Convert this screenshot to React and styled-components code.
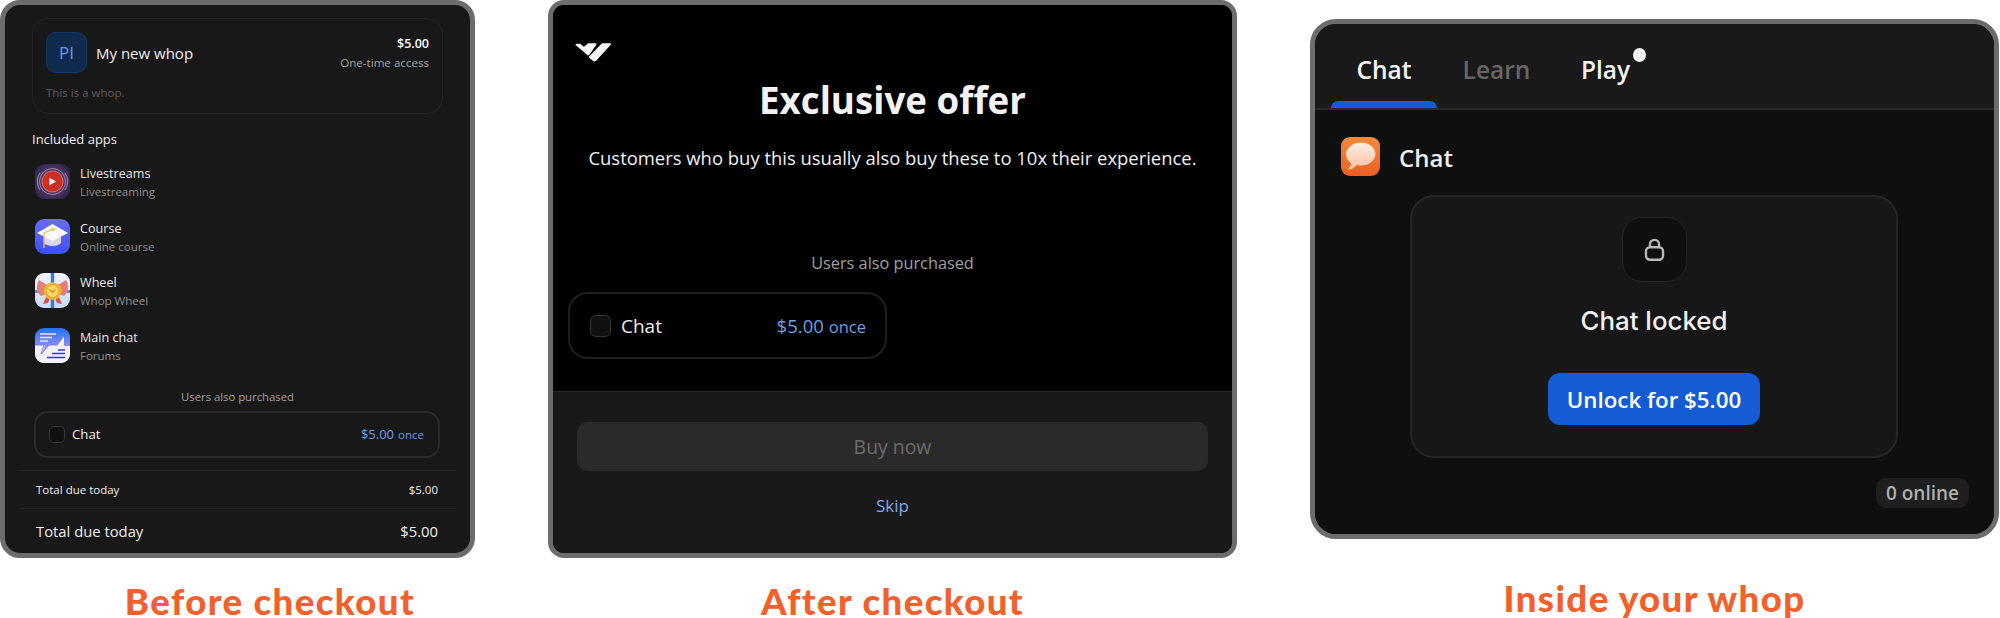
import React from "react";
import styled, { createGlobalStyle } from "styled-components";

const Global = createGlobalStyle`
  html, body { margin: 0; padding: 0; background: #fff; }
  body { font-family: "Open Sans", "Noto Sans", sans-serif; overflow: hidden; }
  * { box-sizing: border-box; }
`;

const Page = styled.div`
  display: flex;
  align-items: flex-start;
  width: 2000px;
  height: 618px;
  overflow: hidden;
`;

const Column = styled.section`
  flex: none;
  width: ${(p) => p.$width}px;
  margin-left: ${(p) => p.$left}px;
  padding-top: ${(p) => p.$top || 0}px;
`;

const Frame = styled.div`
  height: ${(p) => p.$height}px;
  border: 5px solid #6c6c6c;
  border-radius: ${(p) => p.$radius}px;
  background: ${(p) => p.$bg};
  overflow: hidden;
  display: flex;
  flex-direction: column;
`;

const Caption = styled.h2`
  margin: ${(p) => p.$top}px 0 0 ${(p) => p.$shift || 0}px;
  text-align: center;
  font-family: "Lato", sans-serif;
  font-weight: 900;
  font-size: 36.6px;
  line-height: 30px;
  letter-spacing: 1.4px;
  color: #f4602a;
  white-space: nowrap;
`;

/* Before checkout */
const BeforeBody = styled.div`
  padding: 13px 27px 0 27px;
  display: flex;
  flex-direction: column;
`;
const OfferCard = styled.div`
  height: 96px;
  padding: 13px;
  border: 1px solid #242424;
  border-radius: 16px;
`;
const OfferTop = styled.div`
  display: flex;
  align-items: center;
`;
const Avatar = styled.div`
  width: 41px;
  height: 41px;
  border-radius: 10px;
  background: #102a4e;
  border: 1px solid #16396a;
  color: #5e9fec;
  font-size: 17px;
  display: flex;
  align-items: center;
  justify-content: center;
  margin-right: 9px;
`;
const OfferName = styled.div`
  font-size: 15px;
  color: #eee;
  flex: 1;
`;
const OfferPrice = styled.div`
  text-align: right;
`;
const PriceTop = styled.div`
  font-size: 12.5px;
  line-height: 20px;
  font-weight: 600;
  color: #fff;
`;
const PriceSub = styled.div`
  font-size: 11.6px;
  line-height: 18px;
  color: #a3a3a3;
`;
const OfferDesc = styled.div`
  margin-top: 12px;
  font-size: 11.5px;
  line-height: 16px;
  color: #5c5c5c;
`;
const SectionTitle = styled.div`
  margin-top: 15px;
  font-size: 13px;
  line-height: 20px;
  color: #eee;
`;
const AppList = styled.div`
  margin: 15px 0 0 3px;
  display: flex;
  flex-direction: column;
  gap: 19.67px;
`;
const AppRow = styled.div`
  display: flex;
  gap: 10px;
  height: 35px;
`;
const AppIconBox = styled.svg`
  width: 35px;
  height: 35px;
  flex: none;
  border-radius: 9px;
`;
const AppText = styled.div`
  margin-top: 1px;
`;
const AppName = styled.div`
  font-size: 12.6px;
  line-height: 18px;
  color: #e8e8e8;
`;
const AppSub = styled.div`
  font-size: 11.5px;
  line-height: 18px;
  color: #8f8f8f;
`;
const Purchased = styled.div`
  margin-top: ${(p) => p.$top}px;
  text-align: center;
  font-size: ${(p) => p.$size}px;
  line-height: ${(p) => p.$line}px;
  color: #a0a0a0;
`;
const UpsellBox = styled.div`
  margin: ${(p) => p.$top}px 0 0 ${(p) => p.$left}px;
  width: ${(p) => p.$width}px;
  height: ${(p) => p.$height}px;
  padding: 0 ${(p) => p.$padRight}px 0 ${(p) => p.$padLeft}px;
  border: 2px solid ${(p) => p.$line};
  border-radius: ${(p) => p.$radius}px;
  display: flex;
  align-items: center;
`;
const Check = styled.span`
  flex: none;
  width: ${(p) => p.$size}px;
  height: ${(p) => p.$size + 1}px;
  margin-right: ${(p) => p.$gap}px;
  border: 1.5px solid #363636;
  border-radius: ${(p) => p.$radius}px;
  background: #101010;
`;
const UpsellName = styled.span`
  flex: 1;
  font-size: ${(p) => p.$size}px;
  color: #eee;
`;
const UpsellPrice = styled.span`
  color: #6f9fe4;
  font-size: ${(p) => p.$size}px;
  white-space: nowrap;
`;
const Once = styled.span`
  font-size: ${(p) => p.$size}px;
  margin-left: ${(p) => p.$gap}px;
`;
const Totals = styled.div`
  margin: 12px -13px 0;
`;
const TotalRow = styled.div`
  height: ${(p) => p.$height}px;
  padding: 0 18px 0 17px;
  border-top: 1px solid #232323;
  display: flex;
  align-items: center;
  justify-content: space-between;
  font-size: ${(p) => p.$size}px;
  color: #eee;
`;

/* After checkout */
const UpperPane = styled.div`
  height: 386px;
  padding: 36px 15px 0;
  background: #000;
  display: flex;
  flex-direction: column;
`;
const LogoMark = styled.svg`
  display: block;
  width: 40px;
  height: 22px;
  margin-left: 5px;
`;
const OfferTitle = styled.h1`
  margin: 14px 0 0;
  text-align: center;
  font-size: 36.7px;
  line-height: 46px;
  font-weight: 700;
  color: #f2f2f2;
`;
const OfferSub = styled.p`
  margin: 21px 0 0;
  text-align: center;
  font-size: 18.45px;
  line-height: 28px;
  color: #f0f0f0;
  white-space: nowrap;
`;
const LowerPane = styled.div`
  flex: 1;
  background: #191919;
  border-top: 1px solid #2b2b2b;
  padding: 30px 24px 0;
`;
const BuyButton = styled.div`
  height: 49px;
  border-radius: 11px;
  background: #2a2a2a;
  color: #6c6c6c;
  font-size: 19.4px;
  font-weight: 500;
  display: flex;
  align-items: center;
  justify-content: center;
`;
const SkipLink = styled.div`
  margin-top: 23px;
  text-align: center;
  font-size: 17px;
  line-height: 24px;
  color: #7ea9ec;
`;

/* Inside your whop */
const TabBar = styled.nav`
  height: 86px;
  flex: none;
  padding: 0 0 0 16px;
  background: #191919;
  border-bottom: 2px solid #2a2a2a;
  display: flex;
  gap: 2px;
`;
const Tab = styled.div`
  position: relative;
  width: ${(p) => p.$width}px;
  padding-top: 6px;
  display: flex;
  align-items: center;
  justify-content: center;
  font-size: 24.5px;
  font-weight: 600;
  color: ${(p) => (p.$muted ? "#666" : "#f4f4f4")};
  ${(p) =>
    p.$active &&
    `&::after {
      content: "";
      position: absolute;
      left: 0;
      right: 0;
      bottom: 0;
      height: 7px;
      border-radius: 7px 7px 0 0;
      background: #155bd4;
    }`}
`;
const TabLabel = styled.span`
  position: relative;
  left: ${(p) => p.$nudge || 0}px;
`;
const NotifyDot = styled.i`
  position: absolute;
  left: calc(100% + 3px);
  top: -5px;
  width: 13px;
  height: 14px;
  border-radius: 50%;
  background: #f2f2f2;
`;
const ChatPane = styled.div`
  flex: 1;
  background: #0f0f0f;
  padding: 27px 25px 0 26px;
  display: flex;
  flex-direction: column;
`;
const ChatHead = styled.div`
  display: flex;
  align-items: center;
  gap: 19px;
`;
const ChatIconBox = styled.svg`
  width: 39px;
  height: 39px;
  border-radius: 9px;
`;
const ChatHeadTitle = styled.div`
  font-size: 24px;
  font-weight: 600;
  color: #f0f0f0;
  padding-top: 2px;
`;
const LockCard = styled.div`
  width: 488px;
  height: 263px;
  margin: 19px 0 0 69px;
  padding-top: 20px;
  border: 2px solid #262626;
  border-radius: 24px;
  background: #171717;
  display: flex;
  flex-direction: column;
  align-items: center;
`;
const LockTile = styled.div`
  width: 65px;
  height: 65px;
  border: 1px solid #252525;
  border-radius: 20px;
  background: #0f0f0f;
  display: flex;
  align-items: center;
  justify-content: center;
  color: #b8b8b8;
`;
const LockedTitle = styled.div`
  margin-top: 23px;
  font-family: "Inter", sans-serif;
  font-size: 25.9px;
  line-height: 32px;
  font-weight: 500;
  color: #f0f0f0;
`;
const UnlockButton = styled.div`
  margin-top: 36px;
  width: 212px;
  height: 52px;
  border-radius: 12px;
  background: #155bd4;
  color: #fff;
  font-size: 22.3px;
  font-weight: 600;
  display: flex;
  align-items: center;
  justify-content: center;
  white-space: nowrap;
`;
const OnlinePill = styled.div`
  align-self: flex-end;
  margin-top: 20px;
  width: 93px;
  height: 30px;
  border-radius: 10px;
  background: #1f1f1f;
  color: #aeaeae;
  font-size: 19px;
  font-weight: 600;
  display: flex;
  align-items: center;
  justify-content: center;
  white-space: nowrap;
`;

const LiveIcon = () => (
  <AppIconBox viewBox="0 0 35 35">
    <defs>
      <radialGradient id="lv" cx="50%" cy="50%" r="70%">
        <stop offset="0" stopColor="#7a5a94" />
        <stop offset=".6" stopColor="#453460" />
        <stop offset="1" stopColor="#1b1836" />
      </radialGradient>
    </defs>
    <rect width="35" height="35" fill="url(#lv)" />
    <path d="M5 9a15 15 0 0 0 0 17M30 9a15 15 0 0 1 0 17" fill="none" stroke="#b79ad0" strokeWidth=".8" />
    <circle cx="17.500" cy="17.500" r="13" fill="none" stroke="#c9aed9" strokeWidth=".8" opacity=".8" />
    <circle cx="17.500" cy="17.500" r="10.500" fill="#cb2e26" />
    <circle cx="17.500" cy="17.500" r="10.500" fill="none" stroke="#e86f5a" strokeWidth="1" />
    <path d="M14.500 13.800v7.400l6.600-3.700z" fill="#fff" />
  </AppIconBox>
);
const CourseIcon = () => (
  <AppIconBox viewBox="0 0 35 35">
    <defs>
      <linearGradient id="cs" x1="0" y1="0" x2="0" y2="1">
        <stop offset="0" stopColor="#6a6cf8" />
        <stop offset="1" stopColor="#3d50f2" />
      </linearGradient>
    </defs>
    <rect width="35" height="35" fill="url(#cs)" />
    <path d="M9 16v8c3 4 14 4 17 0v-8z" fill="#dcd5f2" />
    <path d="M17.500 5L33 14l-15.500 8L2 14z" fill="#fbf9ff" />
    <path d="M19 10L9 14v15" fill="none" stroke="#f1c24b" strokeWidth="1.300" />
    <ellipse cx="18" cy="10.500" rx="2.500" ry="1.300" fill="#f1c24b" />
  </AppIconBox>
);
const WheelIcon = () => (
  <AppIconBox viewBox="0 0 35 35">
    <defs>
      <linearGradient id="wh" x1="0" y1="0" x2="0" y2="1">
        <stop offset="0" stopColor="#eef5ff" />
        <stop offset="1" stopColor="#c7dcf8" />
      </linearGradient>
    </defs>
    <rect width="35" height="35" fill="url(#wh)" />
    <rect x="15.800" width="3.400" height="35" fill="#3c74e0" />
    <rect y="17" width="35" height="3" fill="#3c74e0" opacity=".8" />
    <path d="M17 15L4 7C1 12 1 19 6 23l11-4zM18 15l13-8c3 5 3 12-2 16l-11-4z" fill="#e87f74" />
    <path d="M12 22l-4 9 5-1 3-7zM23 22l4 9-5-1-3-7z" fill="#d9534d" />
    <circle cx="17.500" cy="18" r="8.800" fill="#eeb934" />
    <circle cx="17.500" cy="18" r="6.500" fill="#f8d566" stroke="#d99c20" strokeWidth=".8" />
    <path d="M13.500 16l4 4.500 4-4.500-2.600.800-1.400 1.400-1.400-1.400z" fill="#d88f1c" />
  </AppIconBox>
);
const ForumIcon = () => (
  <AppIconBox viewBox="0 0 35 35">
    <defs>
      <linearGradient id="fr" x1="0" y1="0" x2="0" y2="1">
        <stop offset="0" stopColor="#1c74f4" />
        <stop offset=".5" stopColor="#8b8cf0" />
        <stop offset="1" stopColor="#f4f2ff" />
      </linearGradient>
    </defs>
    <rect width="35" height="35" fill="url(#fr)" />
    <path d="M0 17h10l-3 9 7-9 8 0 7-9v10h6v17H0z" fill="#f3f0ff" />
    <path d="M0 17h9l-3 9 8-9h8l7-9" fill="none" stroke="#6c6ae0" strokeWidth=".8" />
    <path d="M5 6h16M5 9.500h12M5 13h8" stroke="#e6e4ff" strokeWidth="1.500" />
    <path d="M23 22h7M17 25.500h13M12 29.500h18" stroke="#3a36b8" strokeWidth="1.500" />
  </AppIconBox>
);
const BubbleIcon = () => (
  <ChatIconBox viewBox="0 0 39 39">
    <defs>
      <linearGradient id="ch" x1="0" y1="0" x2="0" y2="1">
        <stop offset="0" stopColor="#f48a3c" />
        <stop offset="1" stopColor="#ea5f24" />
      </linearGradient>
      <linearGradient id="bb" x1="0" y1="0" x2="0" y2="1">
        <stop offset="0" stopColor="#fff0e2" />
        <stop offset="1" stopColor="#f9bfa0" />
      </linearGradient>
    </defs>
    <rect width="39" height="39" fill="url(#ch)" />
    <path
      d="M20 6c8 0 14 4.800 14 11s-6 11-14 11c-1.500 0-2.900-.2-4.200-.5C14 29.500 11 31.800 7.500 32c2-1.600 3-3.400 3.200-5.800C7.500 24.200 5.500 20.900 5.500 17 5.500 10.800 12 6 20 6z"
      fill="url(#bb)"
      stroke="#fde3d0"
      strokeWidth=".8"
    />
  </ChatIconBox>
);
const Whop = () => (
  <LogoMark viewBox="36 60 120 66">
    <g fill="#f4f4f4" stroke="#f4f4f4" strokeWidth="5" strokeLinejoin="round">
      <path d="M46 71h11l11 9-5 5z" />
      <path d="M82 69h22L84 99l-3 2-17-16z" />
      <path d="M124 69h24l-43 47-6 3-13-11z" />
    </g>
  </LogoMark>
);
const LockGlyph = () => (
  <svg width="23" height="25" viewBox="0 0 20 22" fill="none" stroke="currentColor" strokeWidth="2.100">
    <rect x="2.500" y="9" width="15" height="11" rx="3.500" />
    <path d="M6 9V6.500a4 4 0 0 1 8 0V9" />
  </svg>
);

const apps = [
  { name: "Livestreams", sub: "Livestreaming", Icon: LiveIcon },
  { name: "Course", sub: "Online course", Icon: CourseIcon },
  { name: "Wheel", sub: "Whop Wheel", Icon: WheelIcon },
  { name: "Main chat", sub: "Forums", Icon: ForumIcon },
];

export default function App() {
  return (
    <Page>
      <Global />
      <Column $width={475} $left={0}>
        <Frame $height={558} $radius={20} $bg="#181818">
          <BeforeBody>
            <OfferCard>
              <OfferTop>
                <Avatar>PI</Avatar>
                <OfferName>My new whop</OfferName>
                <OfferPrice>
                  <PriceTop>$5.00</PriceTop>
                  <PriceSub>One-time access</PriceSub>
                </OfferPrice>
              </OfferTop>
              <OfferDesc>This is a whop.</OfferDesc>
            </OfferCard>
            <SectionTitle>Included apps</SectionTitle>
            <AppList>
              {apps.map(({ name, sub, Icon }) => (
                <AppRow key={name}>
                  <Icon />
                  <AppText>
                    <AppName>{name}</AppName>
                    <AppSub>{sub}</AppSub>
                  </AppText>
                </AppRow>
              ))}
            </AppList>
            <Purchased $top={26} $size={11.3} $line={16}>Users also purchased</Purchased>
            <UpsellBox $top={6} $left={2} $width={406} $height={47} $padLeft={13} $padRight={14} $line="#2a2a2a" $radius={14}>
              <Check $size={16} $gap={7} $radius={5} />
              <UpsellName $size={13.2}>Chat</UpsellName>
              <UpsellPrice $size={13}>$5.00<Once $size={11.5} $gap={4}>once</Once></UpsellPrice>
            </UpsellBox>
            <Totals>
              <TotalRow $height={38} $size={11.5}>
                <span>Total due today</span>
                <span>$5.00</span>
              </TotalRow>
              <TotalRow $height={46} $size={14.8}>
                <span>Total due today</span>
                <span>$5.00</span>
              </TotalRow>
            </Totals>
          </BeforeBody>
        </Frame>
        <Caption $top={28} $shift={65}>Before checkout</Caption>
      </Column>

      <Column $width={689} $left={73}>
        <Frame $height={558} $radius={16} $bg="#191919">
          <UpperPane>
            <Whop />
            <OfferTitle>Exclusive offer</OfferTitle>
            <OfferSub>Customers who buy this usually also buy these to 10x their experience.</OfferSub>
            <Purchased $top={79} $size={16.3} $line={24}>Users also purchased</Purchased>
            <UpsellBox $top={17} $left={0} $width={319} $height={67} $padLeft={20} $padRight={19} $line="#1f1f1f" $radius={20}>
              <Check $size={21} $gap={10} $radius={6} />
              <UpsellName $size={19}>Chat</UpsellName>
              <UpsellPrice $size={18.5}>$5.00<Once $size={16.5} $gap={5}>once</Once></UpsellPrice>
            </UpsellBox>
          </UpperPane>
          <LowerPane>
            <BuyButton>Buy now</BuyButton>
            <SkipLink>Skip</SkipLink>
          </LowerPane>
        </Frame>
        <Caption $top={28}>After checkout</Caption>
      </Column>

      <Column $width={689} $left={73} $top={19}>
        <Frame $height={520} $radius={26} $bg="#0f0f0f">
          <TabBar>
            <Tab $width={106} $active>Chat</Tab>
            <Tab $width={115} $muted><TabLabel>Learn</TabLabel></Tab>
            <Tab $width={101}><TabLabel $nudge={-1}>Play<NotifyDot /></TabLabel></Tab>
          </TabBar>
          <ChatPane>
            <ChatHead>
              <BubbleIcon />
              <ChatHeadTitle>Chat</ChatHeadTitle>
            </ChatHead>
            <LockCard>
              <LockTile><LockGlyph /></LockTile>
              <LockedTitle>Chat locked</LockedTitle>
              <UnlockButton>Unlock for $5.00</UnlockButton>
            </LockCard>
            <OnlinePill>0 online</OnlinePill>
          </ChatPane>
        </Frame>
        <Caption $top={44}>Inside your whop</Caption>
      </Column>
    </Page>
  );
}
